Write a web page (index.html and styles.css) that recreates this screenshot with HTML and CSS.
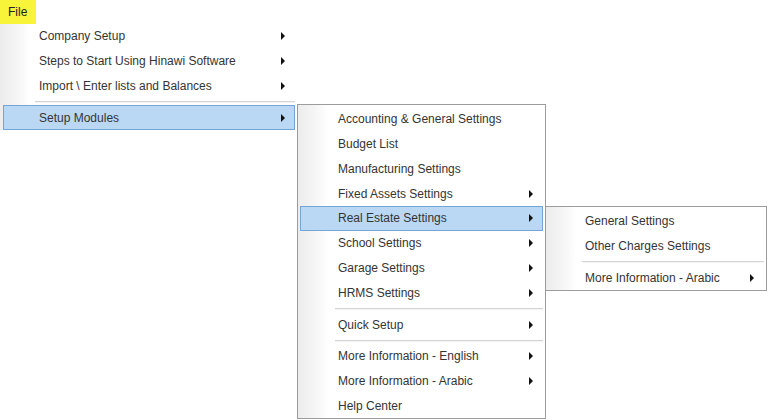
FILE: index.html
```html
<!DOCTYPE html>
<html>
<head>
<meta charset="utf-8">
<link rel="stylesheet" href="styles.css">
</head>
<body>
<div class="screen">
  <div class="file">File</div>

  <div class="menu m1">
    <div class="item"><span class="label">Company Setup</span><span class="arrow"></span></div>
    <div class="item"><span class="label">Steps to Start Using Hinawi Software</span><span class="arrow"></span></div>
    <div class="item"><span class="label">Import \ Enter lists and Balances</span><span class="arrow"></span></div>
    <div class="sep"></div>
    <div class="item active"><span class="label">Setup Modules</span><span class="arrow"></span></div>
  </div>

  <div class="menu m2">
    <div class="item"><span class="label">Accounting &amp; General Settings</span></div>
    <div class="item"><span class="label">Budget List</span></div>
    <div class="item"><span class="label">Manufacturing Settings</span></div>
    <div class="item"><span class="label">Fixed Assets Settings</span><span class="arrow"></span></div>
    <div class="item active"><span class="label">Real Estate Settings</span><span class="arrow"></span></div>
    <div class="item"><span class="label">School Settings</span><span class="arrow"></span></div>
    <div class="item"><span class="label">Garage Settings</span><span class="arrow"></span></div>
    <div class="item"><span class="label">HRMS Settings</span><span class="arrow"></span></div>
    <div class="sep"></div>
    <div class="item"><span class="label">Quick Setup</span><span class="arrow"></span></div>
    <div class="sep sep-tight"></div>
    <div class="item"><span class="label">More Information - English</span><span class="arrow"></span></div>
    <div class="item"><span class="label">More Information - Arabic</span><span class="arrow"></span></div>
    <div class="item"><span class="label">Help Center</span></div>
  </div>

  <div class="menu m3">
    <div class="item"><span class="label">General Settings</span></div>
    <div class="item"><span class="label">Other Charges Settings</span></div>
    <div class="sep"></div>
    <div class="item"><span class="label">More Information - Arabic</span><span class="arrow"></span></div>
  </div>
</div>
</body>
</html>
```

FILE: styles.css
```css
html, body {
  margin: 0;
  padding: 0;
  background: #ffffff;
}

.screen {
  position: relative;
  width: 768px;
  height: 420px;
  overflow: hidden;
  font-family: "Liberation Sans", Arial, sans-serif;
  font-size: 12px;
  color: #343434;
}

.file {
  width: 36px;
  height: 25px;
  background: #f7f43a;
  box-sizing: border-box;
  padding: 5px 0 0 8px;
  color: #222;
}

.menu {
  position: absolute;
  box-sizing: border-box;
  display: flex;
  flex-direction: column;
  background: #ffffff;
}

.menu::before {
  content: "";
  position: absolute;
  top: 0;
  bottom: 0;
  left: 0;
  width: 30px;
  background: linear-gradient(to right, #ececec, #f6f6f6 60%, #ffffff);
  z-index: 0;
}

.m1 {
  left: 0;
  top: 24px;
  width: 296px;
  padding: 0 1px 0 3px;
}

.m2 {
  left: 297px;
  top: 104px;
  width: 249px;
  height: 315px;
  border: 1px solid #9c9c9c;
  padding: 2px 2px;
}

.m3 {
  left: 545px;
  top: 206px;
  width: 222px;
  height: 85px;
  border: 1px solid #9c9c9c;
  padding: 2px 2px 1px;
}

.item {
  position: relative;
  z-index: 1;
  height: 24.75px;
  box-sizing: border-box;
  display: flex;
  align-items: center;
  border: 1px solid transparent;
  flex-shrink: 0;
}

.m1 .item {
  padding-left: 35px;
}

.m2 .item {
  padding-left: 37px;
}

.m3 .item {
  padding-left: 36px;
}

.item.active {
  background: #bad8f4;
  border-color: #73a6d8;
}

.label {
  flex: 1;
  white-space: nowrap;
}

.arrow {
  width: 0;
  height: 0;
  border-top: 4px solid transparent;
  border-bottom: 4px solid transparent;
  border-left: 4px solid #111;
  margin-right: 9px;
}

.sep {
  position: relative;
  z-index: 1;
  height: 7.5px;
  display: flex;
  align-items: center;
  flex-shrink: 0;
}

.sep::after {
  content: "";
  display: block;
  width: 100%;
  height: 1px;
  background: #d4d4d4;
  border-bottom: 1px solid #f4f4f4;
}

.m1 .sep {
  padding-left: 32px;
  height: 7px;
}

.m2 .sep {
  padding-left: 35px;
}

.m2 .sep-tight {
  height: 6.5px;
}

.m3 .sep {
  padding-left: 34px;
  height: 7.5px;
}
```
